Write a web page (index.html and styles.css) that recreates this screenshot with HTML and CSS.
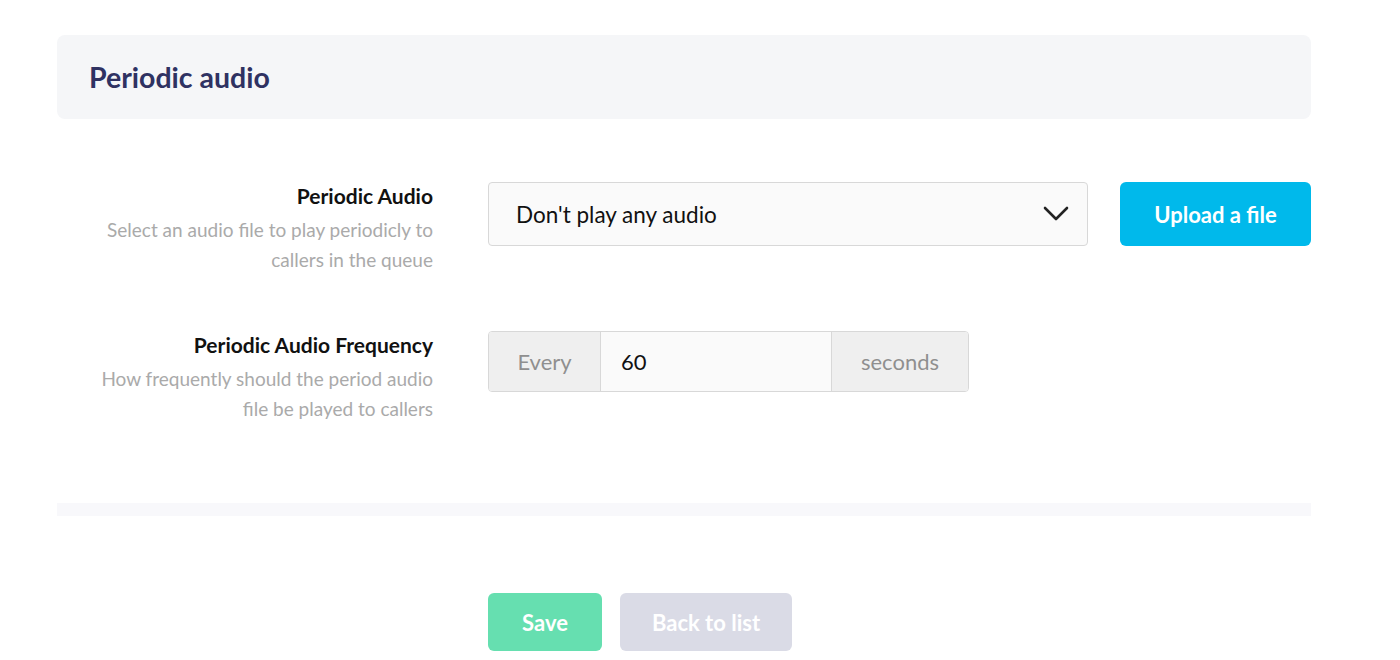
FILE: index.html
```html
<!DOCTYPE html>
<html>
<head>
<meta charset="utf-8">
<link rel="stylesheet" href="styles.css">
</head>
<body>
<div class="page">
  <div class="panel-head">
    <h1 class="panel-title">Periodic audio</h1>
  </div>

  <div class="form">
    <div class="row row-first">
      <div class="label-col">
        <div class="label">Periodic Audio</div>
        <div class="help">Select an audio file to play periodicly to<br>callers in the queue</div>
      </div>
      <div class="control-col">
        <div class="select">
          <span class="select-text">Don't play any audio</span>
          <svg class="chevron" width="26" height="16" viewBox="0 0 26 16"><path d="M2 2 L13 13 L24 2" fill="none" stroke="#222" stroke-width="2.6" stroke-linecap="round" stroke-linejoin="round"/></svg>
        </div>
        <button class="btn btn-upload">Upload a file</button>
      </div>
    </div>

    <div class="row row-second">
      <div class="label-col">
        <div class="label">Periodic Audio Frequency</div>
        <div class="help">How frequently should the period audio<br>file be played to callers</div>
      </div>
      <div class="control-col">
        <div class="input-group">
          <span class="addon addon-left">Every</span>
          <span class="input-value">60</span>
          <span class="addon addon-right">seconds</span>
        </div>
      </div>
    </div>
  </div>

  <div class="divider"></div>

  <div class="actions">
    <button class="btn btn-save">Save</button>
    <button class="btn btn-back">Back to list</button>
  </div>
</div>
</body>
</html>
```
FILE: styles.css
```css
* { box-sizing: border-box; }
html, body { margin: 0; padding: 0; background: #fff; }
body {
  font-family: "Lato", "Open Sans", "Liberation Sans", sans-serif;
  color: #222;
}
.page {
  width: 1254px;
  margin-left: 57px;
  padding-top: 35px;
}
.panel-head {
  height: 84px;
  background: #f5f6f8;
  border-radius: 8px;
  display: flex;
  align-items: center;
  padding-left: 32px;
}
.panel-title {
  margin: 0;
  font-size: 28.5px;
  font-weight: 700;
  color: #2f3262;
}
.form {
  padding-top: 63px;
}
.row {
  display: grid;
  grid-template-columns: 376px 1fr;
  column-gap: 55px;
  height: 92px;
}
.row-second { margin-top: 57px; }
.label-col { text-align: right; }
.label {
  font-size: 21px;
  font-weight: 700;
  color: #111;
  line-height: 28px;
}
.help {
  font-size: 19px;
  color: #aaaaaa;
  line-height: 30px;
  margin-top: 5px;
}
.control-col {
  display: flex;
  align-items: flex-start;
  gap: 32px;
}
.select {
  width: 600px;
  height: 64px;
  border: 1px solid #d8d8d8;
  border-radius: 4px;
  background: #fafafa;
  display: flex;
  align-items: center;
  justify-content: space-between;
  padding: 0 18px 0 27px;
}
.select-text { font-size: 22.5px; color: #111; }
.chevron { display: block; }
.btn {
  border: none;
  border-radius: 6px;
  color: #fff;
  font-family: inherit;
  font-weight: 700;
  cursor: pointer;
}
.btn-upload {
  width: 191px;
  height: 64px;
  background: #00b9eb;
  font-size: 22px;
}
.input-group {
  display: flex;
  width: 481px;
  height: 61px;
  border: 1px solid #d8d8d8;
  border-radius: 4px;
  overflow: hidden;
  font-size: 22px;
}
.addon {
  background: #efefef;
  color: #8f8f8f;
  display: flex;
  align-items: center;
  justify-content: center;
}
.addon-left { width: 112px; border-right: 1px solid #d8d8d8; }
.addon-right { width: 137px; border-left: 1px solid #d8d8d8; }
.input-value {
  flex: 1;
  background: #fafafa;
  display: flex;
  align-items: center;
  padding-left: 20px;
  color: #111;
}
.divider {
  margin-top: 80px;
  height: 13px;
  background: #f8f8fb;
}
.actions {
  padding-top: 77px;
  margin-left: 431px;
  display: flex;
  gap: 18px;
}
.btn-save {
  width: 114px;
  height: 58px;
  background: #66dfb0;
  font-size: 22px;
}
.btn-back {
  width: 172px;
  height: 58px;
  background: #dadbe6;
  font-size: 22px;
}
```
